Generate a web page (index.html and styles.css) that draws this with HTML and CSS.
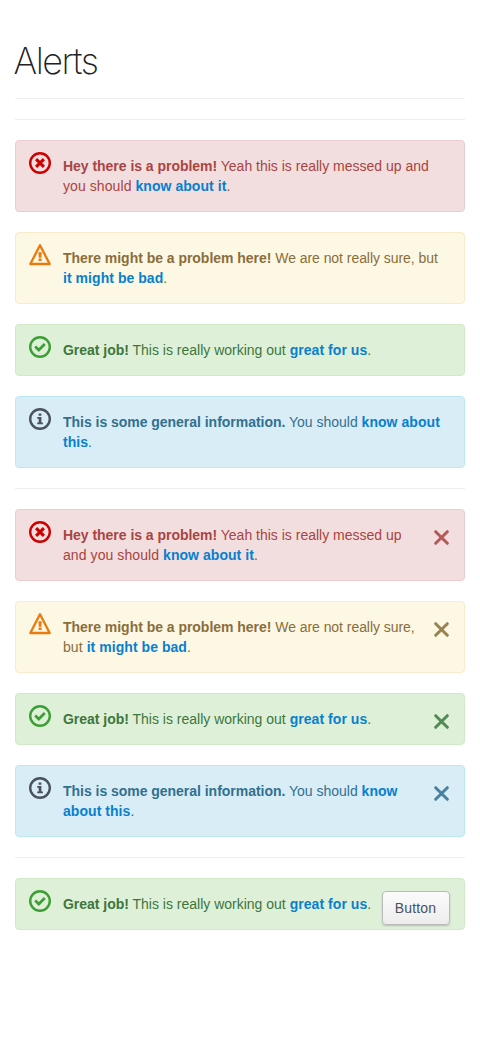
FILE: index.html
```html
<!DOCTYPE html>
<html lang="en">
<head>
<meta charset="utf-8">
<title>Alerts</title>
<link rel="stylesheet" href="styles.css">
</head>
<body>
<svg class="sprite" aria-hidden="true">
  <symbol id="error" viewBox="0 0 22 22"><circle cx="11" cy="11" r="9.8" fill="none" stroke="currentColor" stroke-width="2.4"/><path d="M7.1 7.1l7.8 7.8M14.9 7.1l-7.8 7.8" stroke="currentColor" stroke-width="3.1"/></symbol>
  <symbol id="warning" viewBox="0 0 22 22"><path d="M11 1.3L20.7 20H1.3Z" fill="none" stroke="currentColor" stroke-width="2.3" stroke-linejoin="round"/><path d="M9.4 8.2h3.4l-.4 5.5H9.8ZM9.6 14.6h3v2.4h-3Z" fill="currentColor"/></symbol>
  <symbol id="success" viewBox="0 0 22 22"><circle cx="11" cy="11" r="9.8" fill="none" stroke="currentColor" stroke-width="2.4"/><path d="M6.2 10.5l3.6 3.5 6-6" fill="none" stroke="currentColor" stroke-width="2.7"/></symbol>
  <symbol id="info" viewBox="0 0 22 22"><circle cx="11" cy="11" r="9.8" fill="none" stroke="currentColor" stroke-width="2.4"/><path d="M9.6 5.4h2.8v2.4H9.6ZM8.2 9.1h4.2v5.4h1.5v1.7H8.2v-1.7h1.5v-3.7H8.2Z" fill="currentColor"/></symbol>
  <symbol id="close" viewBox="0 0 15 15"><path d="M1.7 1.7l11.6 11.6M13.3 1.7l-11.6 11.6" stroke="currentColor" stroke-width="3" stroke-linecap="round"/></symbol>
</svg>
<main class="page">
  <h1 class="title">Alerts</h1>
  <hr class="rule">
  <hr class="rule">
  <div class="alert alert-error">
    <svg class="icon"><use href="#error"/></svg>
    <p class="message"><strong>Hey there is a problem!</strong> Yeah this is really messed up and<br><span class="lead">you should </span><a href="#">know about it</a>.</p>
  </div>
  <div class="alert alert-warning">
    <svg class="icon"><use href="#warning"/></svg>
    <p class="message"><strong>There might be a problem here!</strong> We are not really sure, but<br><a href="#">it might be bad</a>.</p>
  </div>
  <div class="alert alert-success">
    <svg class="icon"><use href="#success"/></svg>
    <p class="message"><strong>Great job!</strong> This is really working out <a href="#">great for us</a>.</p>
  </div>
  <div class="alert alert-info">
    <svg class="icon"><use href="#info"/></svg>
    <p class="message"><strong>This is some general information.</strong> You should <a href="#">know about<br>this</a>.</p>
  </div>
  <hr class="rule">
  <div class="alert alert-error">
    <svg class="icon"><use href="#error"/></svg>
    <p class="message"><strong>Hey there is a problem!</strong> Yeah this is really messed up<br><span class="lead">and you should </span><a href="#">know about it</a>.</p>
    <button class="close" aria-label="Close"><svg class="close-icon"><use href="#close"/></svg></button>
  </div>
  <div class="alert alert-warning">
    <svg class="icon"><use href="#warning"/></svg>
    <p class="message"><strong>There might be a problem here!</strong> We are not really sure,<br><span class="lead">but </span><a href="#">it might be bad</a>.</p>
    <button class="close" aria-label="Close"><svg class="close-icon"><use href="#close"/></svg></button>
  </div>
  <div class="alert alert-success">
    <svg class="icon"><use href="#success"/></svg>
    <p class="message"><strong>Great job!</strong> This is really working out <a href="#">great for us</a>.</p>
    <button class="close" aria-label="Close"><svg class="close-icon"><use href="#close"/></svg></button>
  </div>
  <div class="alert alert-info">
    <svg class="icon"><use href="#info"/></svg>
    <p class="message"><strong>This is some general information.</strong> You should <a href="#">know<br>about this</a>.</p>
    <button class="close" aria-label="Close"><svg class="close-icon"><use href="#close"/></svg></button>
  </div>
  <hr class="rule">
  <div class="alert alert-success alert-action">
    <svg class="icon"><use href="#success"/></svg>
    <p class="message"><strong>Great job!</strong> This is really working out <a href="#">great for us</a>.</p>
    <button class="button">Button</button>
  </div>
</main>
</body>
</html>
```

FILE: styles.css
```css
* { box-sizing: border-box; }
body {
  margin: 0;
  background: #fff;
  font: 14px/20px "Liberation Sans", Arial, sans-serif;
}
.sprite { display: none; }
.page { padding: 41px 15px 0; }
.title {
  margin: 0 0 17px -1.5px;
  color: #222;
  font: 200 36px/40px Inter, sans-serif;
  letter-spacing: -1.5px;
}
.rule {
  height: 1px;
  margin: 20px 0;
  border: 0;
  background: #eee;
}
.title + .rule { margin-top: 0; }
.alert {
  display: flex;
  align-items: flex-start;
  margin-bottom: 20px;
  padding: 15px 14px 15px 13px;
  border: 1px solid;
  border-radius: 4px;
}
.alert-error { color: #a94442; background: #f2dede; border-color: #ebccd1; }
.alert-warning { color: #8a6d3b; background: #fcf8e3; border-color: #faebcc; }
.alert-success { color: #3c763d; background: #dff0d8; border-color: #d0e9c6; }
.alert-info { color: #31708f; background: #d9edf7; border-color: #bce8f1; }
.icon {
  flex: none;
  width: 22px;
  height: 22px;
  margin: -4.5px 12px 0 0;
}
.alert-error .icon { color: #c00; }
.alert-warning .icon { color: #ea7a0c; }
.alert-success .icon { color: #3c9f35; }
.alert-info .icon { color: #4a525b; }
.message { flex: 1; margin: 0; white-space: nowrap; }
.message strong { letter-spacing: -.03px; }
.alert-warning .message { letter-spacing: -.05px; }
.message .lead { letter-spacing: .08px; }
.message a {
  color: #0780cf;
  font-weight: bold;
  letter-spacing: .05px;
  text-decoration: none;
}
.close {
  display: flex;
  margin: 4.5px 1px 0 0;
  padding: 0;
  border: 0;
  background: none;
  color: inherit;
  opacity: .85;
}
.close-icon { width: 15px; height: 15px; }
.alert-action { height: 52px; }
.button {
  width: 68px;
  height: 34px;
  margin: -3px 0 0;
  padding: 0 1px 0 0;
  border: 1px solid #bbb;
  border-radius: 4px;
  background: linear-gradient(#fbfbfb, #ededed);
  box-shadow: 0 1px 2px rgba(0, 0, 0, .2);
  color: #4a525b;
  font: 14px/20px "Liberation Sans", Arial, sans-serif;
  letter-spacing: .15px;
}
```
